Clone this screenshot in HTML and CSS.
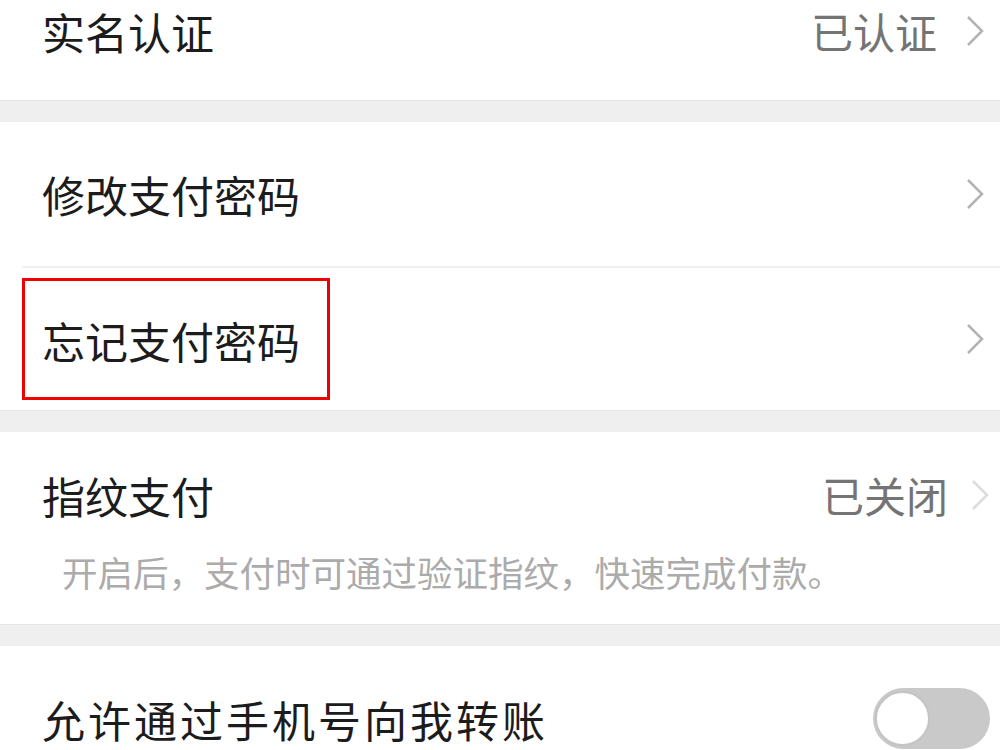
FILE: index.html
```html
<!DOCTYPE html>
<html lang="zh-CN">
<head>
    <meta charset="UTF-8">
    <meta name="viewport" content="width=device-width, initial-scale=1.0">
    <title>支付设置</title>
    <link rel="stylesheet" href="styles.css">
</head>
<body>
    <div class="list">
        <div class="row row-first">
            <span class="title">实名认证</span>
            <span class="extra">
                <span class="value">已认证</span>
                <svg class="chevron" viewBox="0 0 20 32"><polyline points="3,2 17,16 3,30"/></svg>
            </span>
        </div>

        <div class="gap"></div>

        <div class="row row-short">
            <span class="title">修改支付密码</span>
            <svg class="chevron" viewBox="0 0 20 32"><polyline points="3,2 17,16 3,30"/></svg>
        </div>
        <div class="divider"></div>
        <div class="row row-short2">
            <span class="title marked">忘记支付密码</span>
            <svg class="chevron" viewBox="0 0 20 32"><polyline points="3,2 17,16 3,30"/></svg>
        </div>

        <div class="gap"></div>

        <div class="row-block">
            <div class="row-top">
                <span class="title">指纹支付</span>
                <span class="extra tight">
                    <span class="value">已关闭</span>
                    <svg class="chevron faded" viewBox="0 0 20 32"><polyline points="3,2 17,16 3,30"/></svg>
                </span>
            </div>
            <div class="note">开启后，支付时可通过验证指纹，快速完成付款。</div>
        </div>

        <div class="gap"></div>

        <div class="row row-toggle">
            <span class="title wide">允许通过手机号向我转账</span>
            <span class="switch"><span class="knob"></span></span>
        </div>
    </div>
</body>
</html>
```

FILE: styles.css
```css
body { margin: 0; background: #fff; font-family: "Noto Sans CJK SC", "Noto Sans", sans-serif; overflow: hidden; }
.row { display: flex; align-items: center; justify-content: space-between; height: 145px; padding: 0 15px 0 42px; background: #fff; }
.row-first { height: 100px; align-items: flex-start; padding-top: 3px; box-sizing: border-box; }
.row-first .title, .row-first .value { line-height: 56px; }
.row-first .chevron { margin-top: 12px; }
.row-short { height: 144px; }
.row-short2 { height: 142px; }
.gap { height: 22px; background: #efefef; border-top: 1px solid #e6e6e6; box-sizing: border-box; }
.divider { height: 2px; margin-left: 22px; background: #f0f0f0; }
.title { font-size: 43px; line-height: 46px; color: #1c1c1c; }
.title.wide { letter-spacing: 3px; }
.marked { border: 3px solid #f20000; padding: 36px 27px 34px 17px; margin-left: -20px; }
.extra { display: flex; align-items: center; gap: 28px; }
.row-first .extra { align-items: flex-start; }
.extra.tight { gap: 22px; }
.value { font-size: 42px; line-height: 46px; color: #747474; }
.chevron { width: 20px; height: 32px; fill: none; stroke: #b3b3b3; stroke-width: 2.5; }
.chevron.faded { stroke: #dcdcdc; }
.row-block { padding: 40px 10px 32px 42px; background: #fff; }
.row-top { display: flex; align-items: center; justify-content: space-between; }
.note { margin: 34px 0 0 20px; font-size: 35.5px; line-height: 40px; color: #ababab; }
.row-toggle { padding-right: 10px; }
.switch { display: flex; align-items: center; width: 117px; height: 61px; border-radius: 31px; background: #c9c9c9; box-sizing: border-box; padding-left: 2px; }
.knob { width: 55px; height: 55px; border-radius: 50%; background: #fff; border: 2px solid #c4c4c4; box-sizing: border-box; }
```
